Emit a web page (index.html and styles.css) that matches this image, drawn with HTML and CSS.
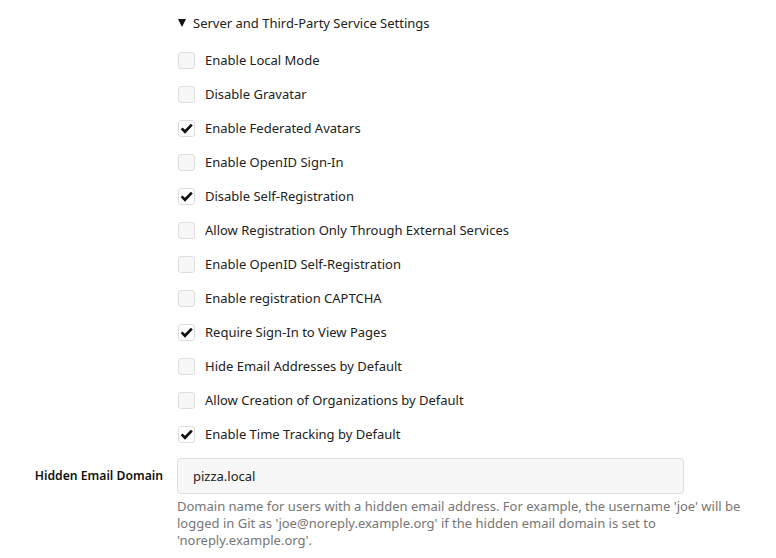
FILE: index.html
```html
<!DOCTYPE html>
<html>
<head>
<meta charset="utf-8">
<link rel="stylesheet" href="styles.css">
</head>
<body>
<div class="form">
  <div class="section">
    <div class="summary"><span class="tri"></span>Server and Third-Party Service Settings</div>
    <div class="checks">
      <label class="check"><span class="box"></span>Enable Local Mode</label>
      <label class="check"><span class="box"></span>Disable Gravatar</label>
      <label class="check"><span class="box on"><svg viewBox="0 0 15 15" width="15" height="15"><path d="M2.6 7.4 L6 10.8 L12.8 3.6" fill="none" stroke="#111" stroke-width="2.7"/></svg></span>Enable Federated Avatars</label>
      <label class="check"><span class="box"></span>Enable OpenID Sign-In</label>
      <label class="check"><span class="box on"><svg viewBox="0 0 15 15" width="15" height="15"><path d="M2.6 7.4 L6 10.8 L12.8 3.6" fill="none" stroke="#111" stroke-width="2.7"/></svg></span>Disable Self-Registration</label>
      <label class="check"><span class="box"></span>Allow Registration Only Through External Services</label>
      <label class="check"><span class="box"></span>Enable OpenID Self-Registration</label>
      <label class="check"><span class="box"></span>Enable registration CAPTCHA</label>
      <label class="check"><span class="box on"><svg viewBox="0 0 15 15" width="15" height="15"><path d="M2.6 7.4 L6 10.8 L12.8 3.6" fill="none" stroke="#111" stroke-width="2.7"/></svg></span>Require Sign-In to View Pages</label>
      <label class="check"><span class="box"></span>Hide Email Addresses by Default</label>
      <label class="check"><span class="box"></span>Allow Creation of Organizations by Default</label>
      <label class="check"><span class="box on"><svg viewBox="0 0 15 15" width="15" height="15"><path d="M2.6 7.4 L6 10.8 L12.8 3.6" fill="none" stroke="#111" stroke-width="2.7"/></svg></span>Enable Time Tracking by Default</label>
    </div>
  </div>
  <div class="field">
    <div class="flabel">Hidden Email Domain</div>
    <div class="fcontent">
      <div class="input">pizza.local</div>
      <div class="help">Domain name for users with a hidden email address. For example, the username 'joe' will be logged in Git as 'joe@noreply.example.org' if the hidden email domain is set to 'noreply.example.org'.</div>
    </div>
  </div>
</div>
</body>
</html>
```

FILE: styles.css
```css
html, body {
  margin: 0;
  padding: 0;
  background: #fff;
}
body {
  font-family: "Noto Sans", "Open Sans", sans-serif;
  font-size: 13px;
  color: #222;
}
.form {
  padding-top: 13px;
}
.section {
  padding-left: 178px;
}
.summary {
  height: 20px;
  line-height: 20px;
  display: flex;
  align-items: center;
}
.tri {
  width: 0;
  height: 0;
  border-left: 4.5px solid transparent;
  border-right: 4.5px solid transparent;
  border-top: 8px solid #111;
  margin-right: 7px;
}
.checks {
  padding-top: 10px;
  display: flex;
  flex-direction: column;
}
.check {
  height: 34px;
  display: flex;
  align-items: center;
}
.box {
  width: 15px;
  height: 15px;
  border: 1px solid #dedede;
  border-radius: 3px;
  background: #f7f7f7;
  margin-right: 10px;
  display: flex;
  align-items: center;
  justify-content: center;
}
.box.on {
  background: #fff;
}
.field {
  display: grid;
  grid-template-columns: 163px 1fr;
  column-gap: 14px;
  margin-top: 7px;
}
.flabel {
  text-align: right;
  font-weight: 600;
  font-size: 12.2px;
  padding-top: 9px;
  color: #111;
}
.fcontent {
  width: 580px;
}
.input {
  height: 34px;
  line-height: 34px;
  border: 1px solid #dedede;
  border-radius: 4px;
  background: #f7f7f7;
  padding-left: 15px;
  width: 490px;
}
.help {
  color: #767676;
  line-height: 17px;
  padding-top: 4px;
}
```
